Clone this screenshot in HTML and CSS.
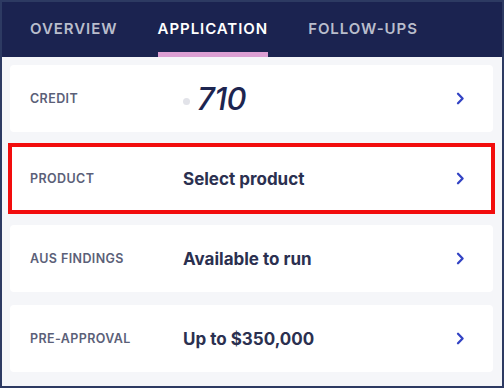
FILE: index.html
```html
<!DOCTYPE html>
<html>
<head>
    <title>Application</title>
    <link rel="stylesheet" href="styles.css">
</head>
<body>
    <div class="frame">
        <div class="tabs">
            <div class="tab">OVERVIEW</div>
            <div class="tab active">APPLICATION</div>
            <div class="tab">FOLLOW-UPS</div>
        </div>

        <div class="list">
            <div class="row">
                <div class="label">CREDIT</div>
                <div class="value score"><span class="dot"></span>710</div>
                <svg class="chev" width="9" height="13" viewBox="0 0 9 13"><path d="M2 1.8 L6.6 6.5 L2 11.2" fill="none" stroke="#3343c4" stroke-width="2.3" stroke-linecap="round" stroke-linejoin="round"/></svg>
            </div>
            <div class="row marked">
                <div class="label">PRODUCT</div>
                <div class="value">Select product</div>
                <svg class="chev" width="9" height="13" viewBox="0 0 9 13"><path d="M2 1.8 L6.6 6.5 L2 11.2" fill="none" stroke="#3343c4" stroke-width="2.3" stroke-linecap="round" stroke-linejoin="round"/></svg>
            </div>
            <div class="row">
                <div class="label">AUS FINDINGS</div>
                <div class="value">Available to run</div>
                <svg class="chev" width="9" height="13" viewBox="0 0 9 13"><path d="M2 1.8 L6.6 6.5 L2 11.2" fill="none" stroke="#3343c4" stroke-width="2.3" stroke-linecap="round" stroke-linejoin="round"/></svg>
            </div>
            <div class="row">
                <div class="label">PRE-APPROVAL</div>
                <div class="value">Up to $350,000</div>
                <svg class="chev" width="9" height="13" viewBox="0 0 9 13"><path d="M2 1.8 L6.6 6.5 L2 11.2" fill="none" stroke="#3343c4" stroke-width="2.3" stroke-linecap="round" stroke-linejoin="round"/></svg>
            </div>
        </div>
    </div>
</body>
</html>
```

FILE: styles.css
```css
* { box-sizing: border-box; }
body { margin: 0; font-family: Inter, "Open Sans", sans-serif; }
.frame { width: 504px; height: 388px; border: 2px solid #2d3a62; background-color: #f5f6f9; overflow: hidden; }
.tabs { display: flex; gap: 40px; height: 55px; padding-left: 28px; background-color: #1b2350; }
.tab { display: flex; align-items: center; height: 55px; padding-top: 5px; padding-bottom: 2px; font-size: 15px; font-weight: 600; letter-spacing: 0.95px; color: #b9bdcc; border-bottom: 5px solid transparent; }
.tab.active { color: #ffffff; border-bottom-color: #dc9fd3; }
.list { display: flex; flex-direction: column; gap: 13px; padding: 8px 9px 0 8px; }
.row { display: flex; align-items: center; height: 67px; padding: 0 28px 0 20px; background-color: #ffffff; border-radius: 4px; }
.row.marked { border-radius: 0; outline: 4px solid #f20d0d; outline-offset: -2px; }
.label { width: 153px; font-size: 12.5px; font-weight: 600; color: #5b6078; letter-spacing: 0.4px; }
.value { flex: 1; font-size: 17px; font-weight: 700; color: #2b3050; }
.score { display: flex; align-items: center; font-size: 31px; font-weight: 500; font-style: italic; color: #1d2550; letter-spacing: -0.5px; }
.dot { width: 7px; height: 7px; margin: 6px 7px 0 0; border-radius: 50%; background-color: #e2e3e9; }
.chev { flex: none; }
```
